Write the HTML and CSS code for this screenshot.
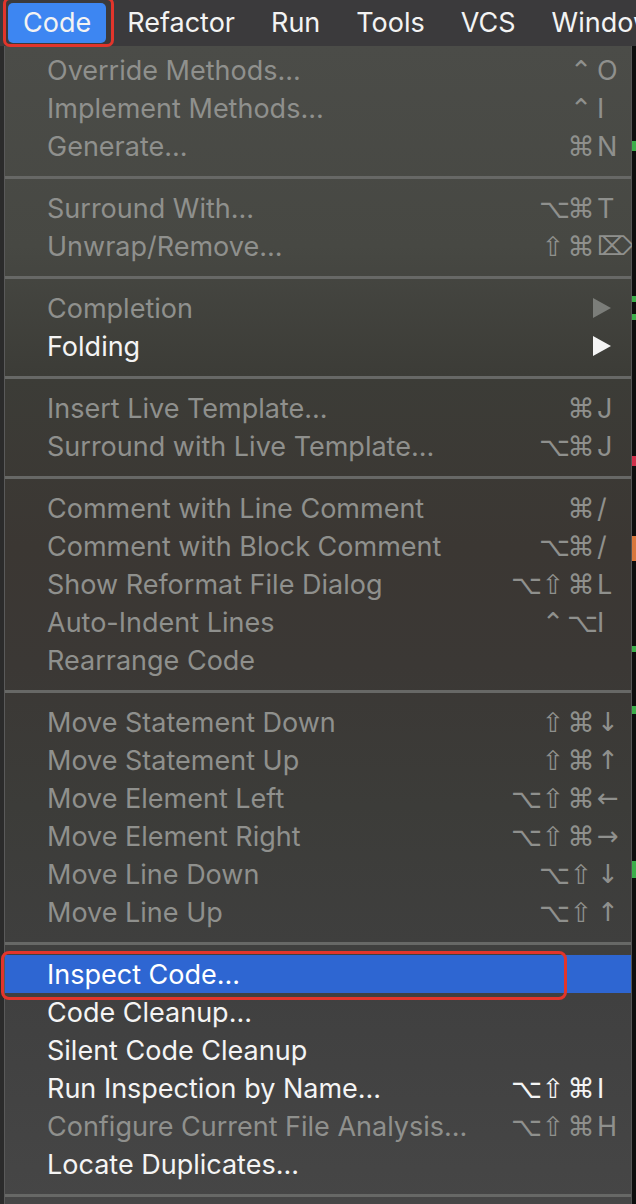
FILE: index.html
```html
<!DOCTYPE html>
<html>
<head>
<meta charset="utf-8">
<link rel="stylesheet" href="styles.css">
</head>
<body>
<div class="screen">
  <div class="menubar">
    <div class="mb-item active">Code</div>
    <div class="mb-item">Refactor</div>
    <div class="mb-item">Run</div>
    <div class="mb-item">Tools</div>
    <div class="mb-item">VCS</div>
    <div class="mb-item">Window</div>
  </div>
  <div class="annot annot-code"></div>
  <div class="content">
    <div class="edge-left"></div>
    <div class="panel">
      <div class="row dis"><span class="label">Override Methods...</span><span class="mods"><i>⌃</i></span><span class="key">O</span></div>
      <div class="row dis"><span class="label">Implement Methods...</span><span class="mods"><i>⌃</i></span><span class="key">I</span></div>
      <div class="row dis"><span class="label">Generate...</span><span class="mods"><i>⌘</i></span><span class="key">N</span></div>
      <div class="sep"></div>
      <div class="row dis"><span class="label">Surround With...</span><span class="mods"><i>⌥</i><i>⌘</i></span><span class="key">T</span></div>
      <div class="row dis"><span class="label">Unwrap/Remove...</span><span class="mods"><i>⇧</i><i>⌘</i></span><span class="key sym">⌦</span></div>
      <div class="sep"></div>
      <div class="row dis"><span class="label">Completion</span><span class="key"><svg class="tri" viewBox="0 0 18 20"><path d="M0 0 L18 10 L0 20 Z"/></svg></span></div>
      <div class="row"><span class="label">Folding</span><span class="key"><svg class="tri" viewBox="0 0 18 20"><path d="M0 0 L18 10 L0 20 Z"/></svg></span></div>
      <div class="sep"></div>
      <div class="row dis"><span class="label">Insert Live Template...</span><span class="mods"><i>⌘</i></span><span class="key">J</span></div>
      <div class="row dis"><span class="label">Surround with Live Template...</span><span class="mods"><i>⌥</i><i>⌘</i></span><span class="key">J</span></div>
      <div class="sep"></div>
      <div class="row dis"><span class="label">Comment with Line Comment</span><span class="mods"><i>⌘</i></span><span class="key">/</span></div>
      <div class="row dis"><span class="label">Comment with Block Comment</span><span class="mods"><i>⌥</i><i>⌘</i></span><span class="key">/</span></div>
      <div class="row dis"><span class="label">Show Reformat File Dialog</span><span class="mods"><i>⌥</i><i>⇧</i><i>⌘</i></span><span class="key">L</span></div>
      <div class="row dis"><span class="label">Auto-Indent Lines</span><span class="mods"><i>⌃</i><i>⌥</i></span><span class="key">I</span></div>
      <div class="row dis"><span class="label">Rearrange Code</span></div>
      <div class="sep"></div>
      <div class="row dis"><span class="label">Move Statement Down</span><span class="mods"><i>⇧</i><i>⌘</i></span><span class="key sym">↓</span></div>
      <div class="row dis"><span class="label">Move Statement Up</span><span class="mods"><i>⇧</i><i>⌘</i></span><span class="key sym">↑</span></div>
      <div class="row dis"><span class="label">Move Element Left</span><span class="mods"><i>⌥</i><i>⇧</i><i>⌘</i></span><span class="key sym">←</span></div>
      <div class="row dis"><span class="label">Move Element Right</span><span class="mods"><i>⌥</i><i>⇧</i><i>⌘</i></span><span class="key sym">→</span></div>
      <div class="row dis"><span class="label">Move Line Down</span><span class="mods"><i>⌥</i><i>⇧</i></span><span class="key sym">↓</span></div>
      <div class="row dis"><span class="label">Move Line Up</span><span class="mods"><i>⌥</i><i>⇧</i></span><span class="key sym">↑</span></div>
      <div class="sep"></div>
      <div class="row sel"><span class="label">Inspect Code...</span></div>
      <div class="row"><span class="label">Code Cleanup...</span></div>
      <div class="row"><span class="label">Silent Code Cleanup</span></div>
      <div class="row"><span class="label">Run Inspection by Name...</span><span class="mods"><i>⌥</i><i>⇧</i><i>⌘</i></span><span class="key">I</span></div>
      <div class="row dis"><span class="label">Configure Current File Analysis...</span><span class="mods"><i>⌥</i><i>⇧</i><i>⌘</i></span><span class="key">H</span></div>
      <div class="row"><span class="label">Locate Duplicates...</span></div>
      <div class="sep"></div>
    </div>
    <div class="edge-right"></div>
  </div>
  <div class="annot annot-inspect"></div>
</div>
</body>
</html>
```

FILE: styles.css
```css
html, body {
  margin: 0;
  padding: 0;
  background: #161616;
}
.screen {
  position: relative;
  width: 636px;
  height: 1204px;
  overflow: hidden;
  font-family: Inter, "Liberation Sans", sans-serif;
  background: #161616;
}
.menubar {
  height: 46px;
  display: flex;
  align-items: center;
  padding-left: 8px;
  background: #3b3a3c;
  white-space: nowrap;
  overflow: hidden;
}
.mb-item {
  height: 40px;
  line-height: 40px;
  padding: 0 18px;
  font-size: 27px;
  color: #f3f3f3;
  flex: none;
}
.mb-item.active {
  background: #3d86f2;
  border-radius: 5px;
  padding: 0 15px;
  margin-right: 3px;
}
.annot {
  position: absolute;
  border: 3px solid #e2352b;
  box-sizing: border-box;
  pointer-events: none;
}
.annot-code {
  left: 3px;
  top: -3px;
  width: 111px;
  height: 50px;
  border-radius: 7px;
}
.annot-inspect {
  left: 1px;
  top: 951px;
  width: 566px;
  height: 49px;
  border-radius: 8px;
}
.content {
  display: flex;
  height: 1158px;
}
.edge-left {
  width: 4px;
  flex: none;
  background: #2b2b2b;
}
.edge-right {
  width: 4px;
  flex: none;
  background: linear-gradient(to bottom,
    #0e0e0e 0px, #0e0e0e 95px, #3cae4a 95px, #3cae4a 105px, #0e0e0e 105px,
    #0e0e0e 250px, #3cae4a 250px, #3cae4a 256px, #0e0e0e 256px,
    #0e0e0e 268px, #3cae4a 268px, #3cae4a 274px, #0e0e0e 274px,
    #0e0e0e 410px, #d0304a 410px, #d0304a 420px, #0e0e0e 420px,
    #0e0e0e 490px, #d8773c 490px, #d8773c 515px, #0e0e0e 515px,
    #0e0e0e 600px, #3cae4a 600px, #3cae4a 606px, #0e0e0e 606px,
    #0e0e0e 660px, #3cae4a 660px, #3cae4a 668px, #0e0e0e 668px,
    #0e0e0e 815px, #3cae4a 815px, #3cae4a 832px, #0e0e0e 832px,
    #0e0e0e 100%);
}
.panel {
  flex: 1;
  padding-top: 5px;
  border-left: 1px solid #5a5a5a;
  border-right: 1px solid #555;
  background: linear-gradient(to bottom,
    #4b4c48 0px, #474843 200px, #3c3c37 330px, #3b3733 500px,
    #3b3835 620px, #3c3c39 760px, #404040 950px, #464646 1158px);
}
.row {
  height: 38px;
  display: flex;
  align-items: center;
  padding-left: 42px;
  padding-right: 4px;
  font-size: 27px;
  color: #f4f4f4;
  white-space: nowrap;
}
.row.dis {
  color: #8f908d;
}
.row.sel {
  background: #2e66d2;
  color: #ffffff;
}
.label {
  flex: 1;
}
.mods {
  display: flex;
  justify-content: flex-end;
}
.mods i {
  font-style: normal;
  width: 28px;
  text-align: center;
  font-family: "DejaVu Sans", sans-serif;
  font-size: 27px;
}
.key {
  width: 32px;
  padding-left: 2px;
  box-sizing: border-box;
  flex: none;
}
.key.sym {
  font-family: "DejaVu Sans", sans-serif;
  font-size: 26px;
}
.tri {
  display: block;
  width: 18px;
  height: 20px;
  margin-left: -4px;
  fill: currentColor;
}
.row.dis .tri {
  fill: #7b7d79;
}
.sep {
  height: 24px;
  display: flex;
  align-items: center;
}
.sep::before {
  content: "";
  display: block;
  width: 100%;
  height: 3px;
  background: #676866;
}
```
